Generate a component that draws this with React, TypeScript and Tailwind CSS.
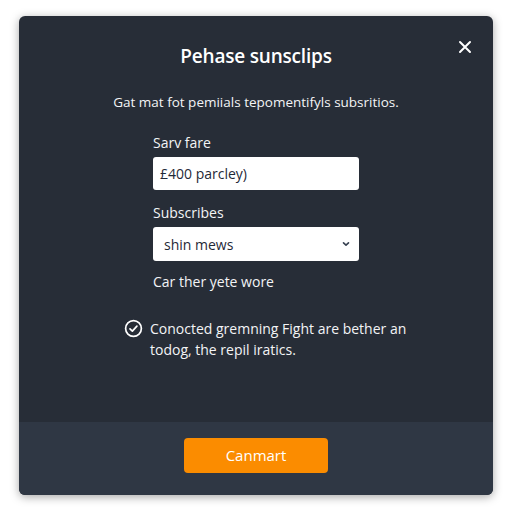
import React from "react";

export default function App() {
  return (
    <div className="w-[512px] h-[512px] bg-white flex items-start justify-center pt-[16px]" style={{ fontFamily: '"Open Sans", "Liberation Sans", sans-serif' }}>
      <div className="relative w-[474px] h-[479px] rounded-[6px] bg-[#272d37] shadow-[0_2px_10px_rgba(0,0,0,0.35)] overflow-hidden flex flex-col">
        <button className="absolute right-[20px] top-[23px] text-white">
          <svg width="16" height="16" viewBox="0 0 16 16" fill="none" stroke="currentColor" strokeWidth="2" strokeLinecap="round">
            <path d="M3 3 L13 13 M13 3 L3 13" />
          </svg>
        </button>
        <div className="flex-1 flex flex-col">
          <h1 className="text-center text-white text-[19px] font-semibold mt-[27px] leading-[26px] tracking-[-0.2px]">Pehase sunsclips</h1>
          <p className="text-center text-[#f3f4f6] text-[13.5px] mt-[23px] leading-[20px]">Gat mat fot pemiials tepomentifyls subsritios.</p>
          <div className="ml-[134px] w-[206px] flex flex-col mt-[21px]">
            <label className="text-[#f3f4f6] text-[14px] leading-[20px]">Sarv fare</label>
            <div className="mt-[4px] h-[33px] rounded-[3px] bg-white flex items-center px-[7px] text-[14px] text-[#1f2937]">£400 parcley)</div>
            <label className="text-[#f3f4f6] text-[14px] leading-[20px] mt-[13px]">Subscribes</label>
            <div className="mt-[4px] h-[34px] rounded-[3px] bg-white flex items-center justify-between pl-[11px] pr-[8px] text-[14px] text-[#1f2937]">
              <span>shin mews</span>
              <svg width="10" height="10" viewBox="0 0 10 10" fill="none" stroke="#374151" strokeWidth="1.6" strokeLinecap="round" strokeLinejoin="round">
                <path d="M2.5 3.8 L5 6.2 L7.5 3.8" />
              </svg>
            </div>
            <p className="text-[#f3f4f6] text-[14px] leading-[20px] mt-[11px]">Car ther yete wore</p>
          </div>
          <div className="flex items-start ml-[105px] mt-[26px] w-[300px]">
            <svg width="19" height="19" viewBox="0 0 20 20" fill="none" stroke="white" strokeWidth="1.8" strokeLinecap="round" strokeLinejoin="round" className="mt-[1px] shrink-0">
              <circle cx="10" cy="10" r="8.3" />
              <path d="M6.3 10.3 L8.8 12.7 L13.6 7.5" />
            </svg>
            <p className="ml-[7px] text-[#f3f4f6] text-[14px] leading-[21px]">Conocted gremning Fight are bether an todog, the repil iratics.</p>
          </div>
        </div>
        <div className="h-[73px] bg-[#2f3744] flex items-start justify-center pt-[16px]">
          <button className="w-[144px] h-[35px] rounded-[4px] bg-[#fb8c00] text-white text-[15px] font-medium">Canmart</button>
        </div>
      </div>
    </div>
  );
}
